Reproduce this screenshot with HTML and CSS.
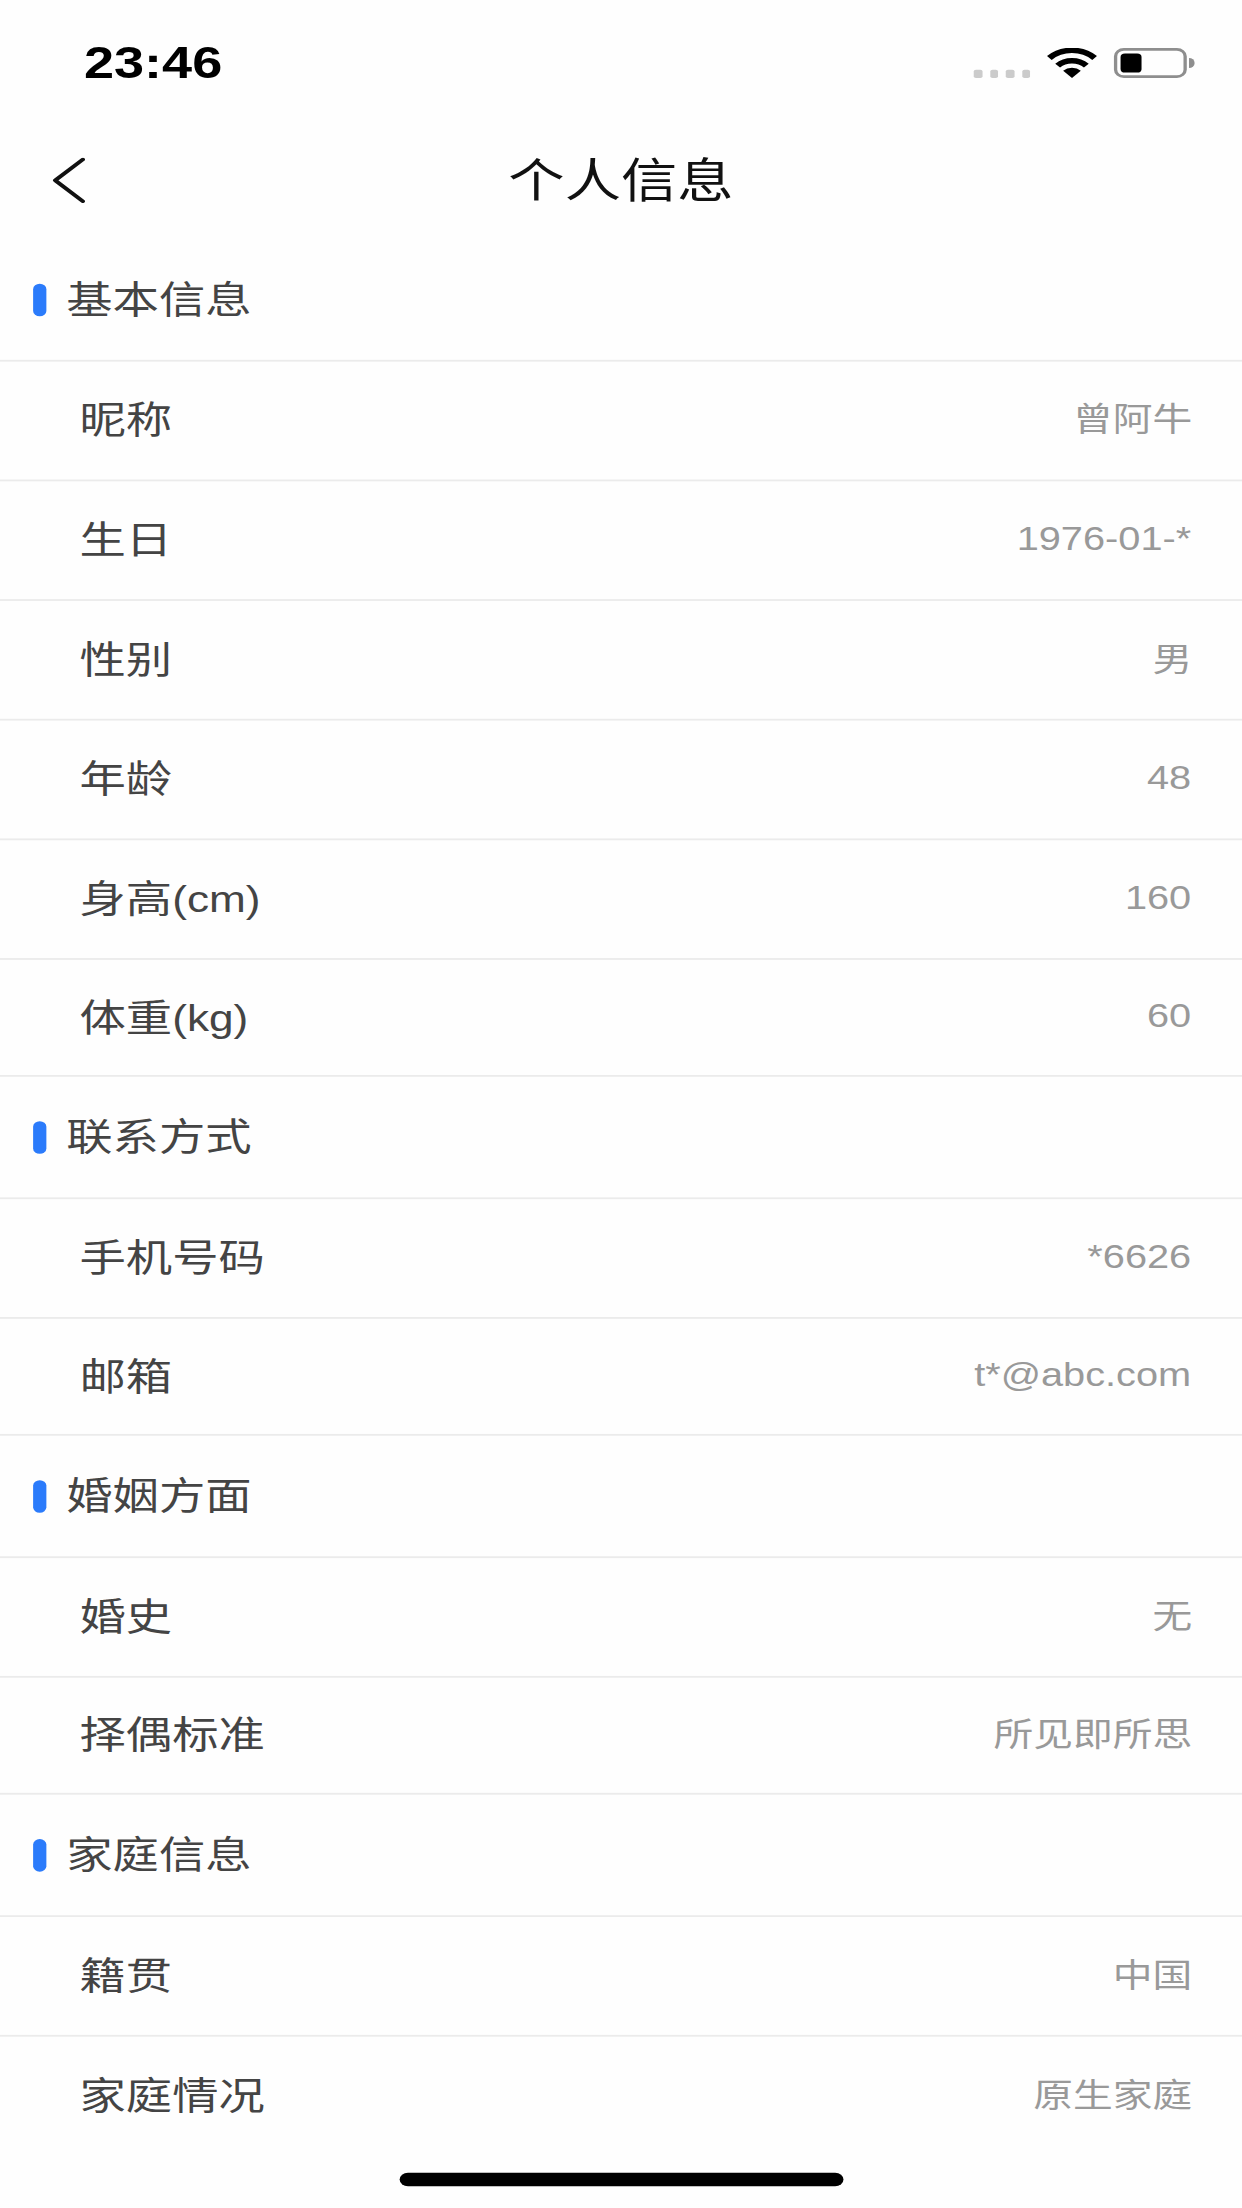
FILE: index.html
```html
<!DOCTYPE html>
<html lang="zh-CN">
<head>
    <meta charset="UTF-8">
    <meta name="viewport" content="width=device-width, initial-scale=1.0">
    <title>个人信息</title>
    <link rel="stylesheet" href="styles.css">
</head>
<body>
    <div class="screen">
        <div class="status">
            <span class="time">23:46</span>
            <div class="status-icons">
                <div class="dots"><i></i><i></i><i></i><i></i></div>
                <svg class="wifi" width="46" height="33" viewBox="0 0 46 33">
                    <path d="M23 33 L15 25 A11.5 11.5 0 0 1 31 25 Z" fill="#000"/>
                    <path d="M10 19.5 A18 18 0 0 1 36 19.5" fill="none" stroke="#000" stroke-width="6"/>
                    <path d="M2.5 11 A29 29 0 0 1 43.5 11" fill="none" stroke="#000" stroke-width="6"/>
                </svg>
                <div class="battery"><div class="battery-level"></div></div>
                <div class="battery-nub"></div>
            </div>
        </div>
        <div class="nav">
            <svg class="back" width="30" height="50" viewBox="0 0 30 50">
                <polyline points="28,2 3,25 28,48" fill="none" stroke="#111" stroke-width="4" stroke-linecap="round" stroke-linejoin="round"/>
            </svg>
            <h1 class="title">个人信息</h1>
        </div>

        <div class="group-head"><span class="mark"></span><span class="head-text">基本信息</span></div>
        <div class="row"><span class="label">昵称</span><span class="value">曾阿牛</span></div>
        <div class="row"><span class="label">生日</span><span class="value num">1976-01-*</span></div>
        <div class="row"><span class="label">性别</span><span class="value">男</span></div>
        <div class="row"><span class="label">年龄</span><span class="value num">48</span></div>
        <div class="row"><span class="label">身高<span class="unit">(cm)</span></span><span class="value num">160</span></div>
        <div class="row last"><span class="label">体重<span class="unit">(kg)</span></span><span class="value num">60</span></div>

        <div class="group-head"><span class="mark"></span><span class="head-text">联系方式</span></div>
        <div class="row"><span class="label">手机号码</span><span class="value num">*6626</span></div>
        <div class="row last"><span class="label">邮箱</span><span class="value num">t*@abc.com</span></div>

        <div class="group-head"><span class="mark"></span><span class="head-text">婚姻方面</span></div>
        <div class="row"><span class="label">婚史</span><span class="value">无</span></div>
        <div class="row last"><span class="label">择偶标准</span><span class="value">所见即所思</span></div>

        <div class="group-head"><span class="mark"></span><span class="head-text">家庭信息</span></div>
        <div class="row"><span class="label">籍贯</span><span class="value">中国</span></div>
        <div class="row end"><span class="label">家庭情况</span><span class="value">原生家庭</span></div>

        <div class="home-bar"></div>
    </div>
</body>
</html>
```

FILE: styles.css
```css
html, body {
    margin: 0;
    height: 2208px;
    overflow: hidden;
    background: #fefefe;
}

/* the shot is a 1125x2436 phone capture squeezed to 1242x2208 */
.screen {
    position: relative;
    width: 1125px;
    height: 2436px;
    margin-bottom: -228px;
    transform: scale(1.104, 0.9064);
    transform-origin: 0 0;
    font-family: "Liberation Sans", "Noto Sans CJK SC", sans-serif;
}

.status {
    height: 132px;
    box-sizing: border-box;
    padding: 0 43px 0 76px;
    display: flex;
    align-items: center;
    justify-content: space-between;
}
.time {
    padding-top: 5px;
    font-size: 49px;
    font-weight: 700;
    color: #000;
}
.status-icons {
    display: flex;
    align-items: flex-end;
    padding-top: 6px;
}
.dots {
    display: flex;
    gap: 7px;
    margin-right: 15px;
}
.dots i {
    width: 7.5px;
    height: 9px;
    border-radius: 2px;
    background: #cbcbcb;
}
.wifi {
    margin-right: 15px;
}
.battery {
    width: 66px;
    height: 33px;
    box-sizing: border-box;
    border: 3px solid #8e8e8e;
    border-radius: 9px;
    padding: 3px;
}
.battery-level {
    width: 19px;
    height: 100%;
    background: #000;
    border-radius: 4px;
}
.battery-nub {
    width: 5px;
    height: 11px;
    margin: 0 0 11px 2px;
    background: #8e8e8e;
    border-radius: 0 5px 5px 0;
}

.nav {
    height: 132px;
    display: grid;
    grid-template-columns: 1fr auto 1fr;
    align-items: center;
}
.back {
    margin: 2px 0 0 47px;
}
.title {
    margin: 0;
    padding-bottom: 7px;
    font-size: 51px;
    font-weight: 400;
    color: #111;
}

.group-head {
    height: 135px;
    box-sizing: border-box;
    padding-left: 30px;
    display: flex;
    align-items: center;
    gap: 18px;
    font-size: 42px;
    color: #444444;
    border-bottom: 2px solid #ebebeb;
}
.head-text {
    padding-bottom: 9px;
}
.mark {
    width: 12px;
    height: 36px;
    border-radius: 6px;
    background: #2b7bfb;
}

.row {
    height: 132px;
    box-sizing: border-box;
    padding: 0 45px 0 72px;
    display: flex;
    align-items: center;
    justify-content: space-between;
    border-bottom: 2px solid #ebebeb;
}
.row.last {
    height: 129px;
}
.row.end {
    border-bottom: none;
}
.label {
    padding-bottom: 9px;
    font-size: 42px;
    color: #444444;
}
.unit {
    font-size: 40px;
}
.value {
    padding-bottom: 9px;
    font-size: 36px;
    color: #999999;
}
.value.num {
    padding-bottom: 3px;
    margin-right: 1px;
}

.home-bar {
    position: absolute;
    left: 362px;
    bottom: 24px;
    width: 402px;
    height: 15px;
    border-radius: 8px;
    background: #000;
}
```
